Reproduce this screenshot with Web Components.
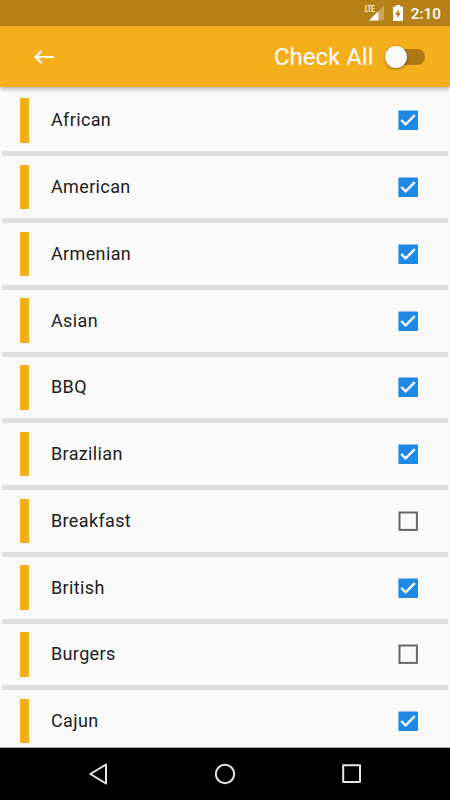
<!DOCTYPE html>
<html lang="en">
<head>
<meta charset="utf-8">
<meta name="viewport" content="width=device-width, initial-scale=1">
<title>Cuisines</title>
<style>
  body {
    margin: 0;
    font-family: Roboto, sans-serif;
    overflow: hidden;
  }
</style>
</head>
<body>
<app-screen>
  <status-bar slot="status" time="2:10"></status-bar>
  <app-bar slot="bar">Check All</app-bar>
  <cuisine-list></cuisine-list>
  <nav-bar slot="nav"></nav-bar>
</app-screen>

<script>
const screenTemplate = document.createElement('template');
screenTemplate.innerHTML = `
<style>
    :host {
        display: flex;
        flex-direction: column;
        height: 100vh;
        background: #fafafa;
        --accent: #f5af1d;
        --accent-dark: #b58017;
    }

    main {
        flex: 1;
        min-height: 0;
        overflow: hidden;
    }
</style>
<slot name="status"></slot>
<slot name="bar"></slot>
<main><slot></slot></main>
<slot name="nav"></slot>
`;

class AppScreen extends HTMLElement {
  constructor() {
    super();
    this.attachShadow({ mode: 'open' }).appendChild(screenTemplate.content.cloneNode(true));
  }
}

const statusTemplate = document.createElement('template');
statusTemplate.innerHTML = `
<style>
    :host {
        display: flex;
        justify-content: flex-end;
        align-items: center;
        box-sizing: border-box;
        height: 26px;
        flex: none;
        padding-right: 9px;
        background: var(--accent-dark);
        color: #fff;
    }

    .signal {
        display: flex;
        align-items: flex-start;
        height: 16px;
    }

    .lte {
        font: 700 9px/9px Roboto, sans-serif;
        width: 11px;
        margin-right: -7px;
        transform: scaleX(0.66);
        transform-origin: left;
    }

    .battery {
        margin: 0 8px 0 9px;
    }

    .time {
        font-size: 15.4px;
        font-weight: 500;
        line-height: 26px;
        padding-top: 2px;
    }
</style>
<div class="signal">
    <span class="lte">LTE</span>
    <svg width="15" height="16" viewBox="0 0 15 16">
        <path d="M15 0.5V15.5H0L7.5 8H9V6.5Z" fill="#fff" fill-opacity="0.3"/>
        <path d="M9.3 6.2V15.5H0Z" fill="#fff"/>
    </svg>
</div>
<svg class="battery" width="10" height="16" viewBox="0 0 10 16">
    <path d="M3 0H7V1.5H9Q10 1.5 10 2.5V15Q10 16 9 16H1Q0 16 0 15V2.5Q0 1.5 1 1.5H3Z" fill="#fff"/>
    <path d="M5.6 4V7.8H8L4.4 13.5V9.7H2Z" fill="#b58017"/>
</svg>
<span class="time"></span>
`;

class StatusBar extends HTMLElement {
  constructor() {
    super();
    this.attachShadow({ mode: 'open' }).appendChild(statusTemplate.content.cloneNode(true));
  }

  connectedCallback() {
    this.shadowRoot.querySelector('.time').textContent = this.getAttribute('time');
  }
}

const barTemplate = document.createElement('template');
barTemplate.innerHTML = `
<style>
    :host {
        display: flex;
        align-items: center;
        box-sizing: border-box;
        height: 61px;
        flex: none;
        padding: 0 25px 0 34px;
        background: var(--accent);
        color: #fff;
        box-shadow: 0 1px 5px rgba(0, 0, 0, 0.4);
        clip-path: inset(0 0 -8px 0);
        z-index: 1;
    }

    .label {
        margin-left: auto;
        font-size: 24px;
        line-height: 28px;
    }

    .switch {
        display: flex;
        align-items: center;
        width: 37px;
        height: 16px;
        margin-left: 14.5px;
        position: relative;
    }

    .track {
        width: 34px;
        height: 16px;
        margin-left: 3px;
        border-radius: 8px;
        background: #ab7a14;
    }

    .thumb {
        position: absolute;
        left: -3px;
        top: -3px;
        width: 22px;
        height: 22px;
        border-radius: 50%;
        background: #fafafa;
        box-shadow: 0 1px 3px rgba(0, 0, 0, 0.45);
    }
</style>
<svg width="20" height="14" viewBox="0 0 20 14" fill="none" stroke="#fff" stroke-width="2.2">
    <path d="M20 7H1.5M7.5 1L1.5 7L7.5 13"/>
</svg>
<span class="label"><slot></slot></span>
<div class="switch"><div class="track"></div><div class="thumb"></div></div>
`;

class AppBar extends HTMLElement {
  constructor() {
    super();
    this.attachShadow({ mode: 'open' }).appendChild(barTemplate.content.cloneNode(true));
  }
}

const rowTemplate = document.createElement('template');
rowTemplate.innerHTML = `
<style>
    :host {
        display: flex;
        align-items: center;
        box-sizing: border-box;
        height: 66.75px;
        margin: 0 2px;
        padding: 0 30px 0 17.5px;
        border-bottom: 5px solid #dedede;
        color: #1c1c1c;
    }

    .mark {
        width: 9px;
        height: 44.5px;
        margin-right: 22.5px;
        background: var(--accent);
    }

    .name {
        flex: 1;
        font-size: 18px;
        line-height: 22px;
        letter-spacing: 0.36px;
    }

    .on, :host([checked]) .off {
        display: none;
    }

    :host([checked]) .on {
        display: inline;
    }
</style>
<div class="mark"></div>
<span class="name"><slot></slot></span>
<svg width="20" height="20" viewBox="0 0 20 20" fill="none">
    <rect class="off" x="1.5" y="1.5" width="17.4" height="17.4" stroke="#666" stroke-width="2"/>
    <g class="on">
        <rect x="0.4" y="0.4" width="19.6" height="19.6" rx="0.8" fill="#1e88e5"/>
        <path d="M3.2 10L7.6 14.4L16.8 5.2" stroke="#fff" stroke-width="2.4"/>
    </g>
</svg>
`;

class CuisineRow extends HTMLElement {
  constructor() {
    super();
    this.attachShadow({ mode: 'open' }).appendChild(rowTemplate.content.cloneNode(true));
  }
}

const cuisines = [
  ['African', true],
  ['American', true],
  ['Armenian', true],
  ['Asian', true],
  ['BBQ', true],
  ['Brazilian', true],
  ['Breakfast', false],
  ['British', true],
  ['Burgers', false],
  ['Cajun', true],
];

class CuisineList extends HTMLElement {
  constructor() {
    super();
    this.attachShadow({ mode: 'open' });
    this.shadowRoot.innerHTML = `
      <style>
        :host {
          display: block;
          padding-top: 2.5px;
        }
      </style>
    `;
  }

  connectedCallback() {
    for (const [name, checked] of cuisines) {
      const row = document.createElement('cuisine-row');
      row.textContent = name;
      row.toggleAttribute('checked', checked);
      this.shadowRoot.appendChild(row);
    }
  }
}

const navTemplate = document.createElement('template');
navTemplate.innerHTML = `
<style>
    :host {
        display: flex;
        justify-content: space-between;
        align-items: center;
        box-sizing: border-box;
        height: 53px;
        flex: none;
        padding: 0 88px;
        border-top: 1px solid #aaa;
        background: #000;
    }

    svg {
        fill: none;
        stroke: #e8e8e8;
        stroke-width: 2;
        stroke-linejoin: round;
    }
</style>
<svg width="20" height="22" viewBox="0 0 20 22"><path d="M18 1.5V20.5L2.3 11Z"/></svg>
<svg width="22" height="22" viewBox="0 0 22 22"><circle cx="11" cy="11" r="9.2"/></svg>
<svg width="20" height="22" viewBox="0 0 20 22"><rect x="1.2" y="2.2" width="16.8" height="16.8"/></svg>
`;

class NavBar extends HTMLElement {
  constructor() {
    super();
    this.attachShadow({ mode: 'open' }).appendChild(navTemplate.content.cloneNode(true));
  }
}

customElements.define('cuisine-row', CuisineRow);
customElements.define('cuisine-list', CuisineList);
customElements.define('status-bar', StatusBar);
customElements.define('app-bar', AppBar);
customElements.define('nav-bar', NavBar);
customElements.define('app-screen', AppScreen);
</script>
</body>
</html>
